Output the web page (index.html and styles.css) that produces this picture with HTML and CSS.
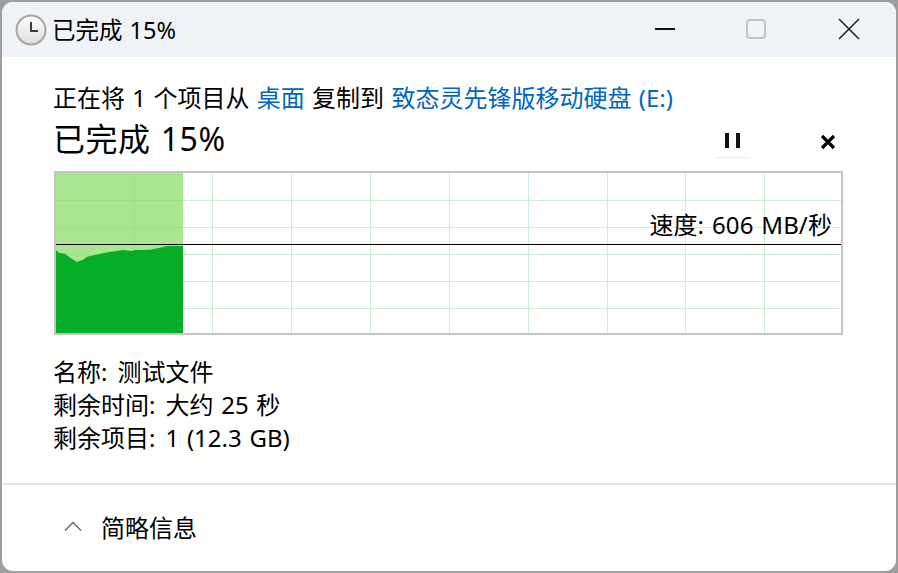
FILE: index.html
```html
<!DOCTYPE html>
<html lang="zh-CN">
<head>
<meta charset="utf-8">
<title>已完成 15%</title>
<link rel="stylesheet" href="styles.css">
</head>
<body>
<div class="window">
  <header class="titlebar">
    <svg class="clock" width="32" height="32" viewBox="0 0 32 32">
      <defs>
        <linearGradient id="face" x1="0" y1="0" x2="0" y2="1">
          <stop offset="0" stop-color="#ffffff"/>
          <stop offset="1" stop-color="#dcdcdc"/>
        </linearGradient>
      </defs>
      <circle cx="16" cy="16" r="14.5" fill="url(#face)" stroke="#a6a6a6" stroke-width="2"/>
      <path d="M16 8v9h7" fill="none" stroke="#3c3c3c" stroke-width="2"/>
    </svg>
    <span class="title">已完成 15%</span>
    <div class="controls">
      <svg class="ctl" width="22" height="22" viewBox="0 0 22 22"><path d="M1 11h20" stroke="#111" stroke-width="2"/></svg>
      <svg class="ctl ctl-max" width="22" height="22" viewBox="0 0 22 22"><rect x="2" y="2" width="18" height="18" rx="3" fill="none" stroke="#c4c4c4" stroke-width="2"/></svg>
      <svg class="ctl" width="22" height="22" viewBox="0 0 22 22"><path d="M1 1l20 20M21 1L1 21" stroke="#222" stroke-width="1.6" fill="none"/></svg>
    </div>
  </header>

  <main class="body">
    <p class="line">正在将 1 个项目从 <a class="link">桌面</a> 复制到 <a class="link">致态灵先锋版移动硬盘 (E:)</a></p>
    <div class="headrow">
      <h1 class="heading">已完成 15%</h1>
      <div class="actions">
        <button class="action pause" aria-label="暂停"><i></i><i></i></button>
        <svg class="cancel" width="16" height="16" viewBox="0 0 16 16"><path d="M2 2l12 12M14 2L2 14" stroke="#000" stroke-width="3.2" fill="none"/></svg>
      </div>
    </div>

    <div class="chart">
      <svg width="785" height="160" viewBox="0 0 785 160" shape-rendering="crispEdges">
        <g stroke="#cdeed6" stroke-width="1">
          <path d="M78.5 0v160M156.5 0v160M235.5 0v160M314.5 0v160M393.5 0v160M472.5 0v160M551.5 0v160M629.5 0v160M708.5 0v160"/>
          <path d="M0 27.5h785M0 54.5h785M0 81.5h785M0 108.5h785M0 135.5h785"/>
        </g>
        <rect x="0" y="0" width="127" height="160" fill="#aae690"/>
        <path d="M78.5 0v160M0 27.5h127M0 54.5h127M0 81.5h127M0 108.5h127M0 135.5h127" stroke="#98e284" stroke-width="1"/>
        <path shape-rendering="auto" d="M0 77 3 79.700 9 80.700 14 84.700 21 89 27 86.700 31 83.700 42 81.300 52 79.300 67 77 76 78 79 77 94 76.700 106 74.300 111 73 127 73V160H0Z" fill="#05ae26"/>
        <path d="M0 71.500h785" stroke="#000" stroke-width="1"/>
      </svg>
      <span class="speed">速度: 606 MB/秒</span>
    </div>

    <dl class="details">
      <div class="row"><dt>名称:</dt><dd>测试文件</dd></div>
      <div class="row"><dt>剩余时间:</dt><dd>大约 25 秒</dd></div>
      <div class="row"><dt>剩余项目:</dt><dd>1 (12.3 GB)</dd></div>
    </dl>
  </main>

  <footer class="footer">
    <svg class="chev" width="18" height="10" viewBox="0 0 18 10"><path d="M1 9.500L9 1.500l8 8" fill="none" stroke="#666" stroke-width="1.400"/></svg>
    <span class="less">简略信息</span>
  </footer>
</div>
</body>
</html>
```
FILE: styles.css
```css
* { box-sizing: border-box; }
html, body { margin: 0; height: 100%; }
body {
  background: #9e9e9e;
  padding: 2px;
  font-family: "Noto Sans", "Noto Sans CJK SC", sans-serif;
  color: #000;
  overflow: hidden;
}
.window {
  width: 894px;
  height: 569px;
  background: #fff;
  border-radius: 11px;
  display: flex;
  flex-direction: column;
  overflow: hidden;
}
.titlebar {
  height: 55px;
  flex: none;
  background: #eff3f8;
  display: flex;
  align-items: center;
  padding-left: 13px;
}
.clock { flex: none; margin-right: 5px; }
.title { font-size: 23.500px; line-height: 30px; word-spacing: 1px; }
.controls {
  margin-left: auto;
  margin-top: -1px;
  display: flex;
  align-items: center;
  gap: 69px;
  padding-right: 36px;
}
.ctl { display: block; }
.ctl-max { margin-right: 2px; }
.body { padding: 25px 52px 0; flex: 1; }
.line { margin: 0 0 0 -1px; font-size: 24px; line-height: 32px; white-space: nowrap; word-spacing: 1.100px; }
.link { color: #0067c0; }
.headrow { display: flex; height: 44px; margin: 3px 0 10px; }
.heading { margin: 0 0 0 -1px; font-size: 32px; font-weight: 400; line-height: 44px; letter-spacing: 0.500px; word-spacing: 1.500px; }
.actions { margin: 0 0 3px auto; align-self: flex-end; display: flex; align-items: center; padding-right: 8px; gap: 70px; }
.action {
  width: 35px;
  height: 30px;
  padding: 0 0 4px;
  border: 0;
  background: none;
  border-bottom: 1px solid #e3edf5;
  display: flex;
  align-items: center;
  justify-content: center;
  gap: 7px;
}
.action i { display: block; width: 4px; height: 15px; background: #111; }
.cancel { display: block; margin-bottom: 2px; }
.chart {
  position: relative;
  width: 789px;
  height: 164px;
  border: 2px solid #c4c4c4;
}
.chart svg { display: block; }
.speed {
  position: absolute;
  right: 9px;
  top: 36px;
  font-size: 24px;
  line-height: 32px;
  white-space: nowrap;
  word-spacing: 1.500px;
  letter-spacing: 0.100px;
}
.details { margin: 20px 0 0 -1px; font-size: 24px; line-height: 33px; }
.row { display: flex; gap: 10px; white-space: nowrap; word-spacing: 1.500px; }
.row dd { margin: 0; }
.footer {
  height: 88px;
  flex: none;
  border-top: 2px solid #e4e4e4;
  display: flex;
  align-items: center;
  padding-left: 62px;
}
.chev { flex: none; margin-right: 19px; margin-top: -4px; }
.less { font-size: 24px; line-height: 32px; }
```
